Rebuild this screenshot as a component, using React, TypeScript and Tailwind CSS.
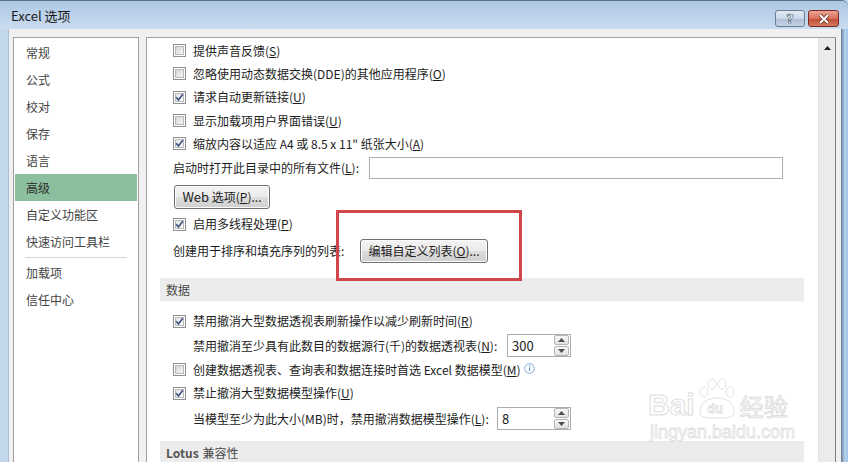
import React from "react";

const FONT = "font-['Microsoft_YaHei','Noto_Sans_CJK_SC','Noto_Sans',sans-serif]";

function Check({ checked }: { checked?: boolean }) {
  return (
    <svg width="13" height="13" viewBox="0 0 13 13" className="shrink-0">
      <defs>
        <linearGradient id={checked ? "gc" : "gu"} x1="0" y1="0" x2="1" y2="1">
          <stop offset="0" stopColor={checked ? "#e4e4e4" : "#d2d2d2"} />
          <stop offset="1" stopColor="#fafafa" />
        </linearGradient>
      </defs>
      <rect x="0.5" y="0.5" width="12" height="12" fill="#ffffff" stroke="#8e8f8f" />
      <rect x="2.5" y="2.5" width="8" height="8" fill={`url(#${checked ? "gc" : "gu"})`} stroke="#b9b9b9" />
      {checked && (
        <path d="M3.2 6.3 L5.4 8.9 L9.8 3.2" fill="none" stroke="#3f5486" strokeWidth="1.7" />
      )}
    </svg>
  );
}

function CheckRow({ checked, children, h }: { checked?: boolean; children: React.ReactNode; h: string }) {
  return (
    <div className={`flex items-center gap-[7px] pl-[13px] ${h}`}>
      <Check checked={checked} />
      <span className="whitespace-nowrap">{children}</span>
    </div>
  );
}

function WinButton({ children, w }: { children: React.ReactNode; w: string }) {
  return (
    <div
      className={`${w} h-[24px] shrink-0 flex items-center justify-center rounded-[3px] border border-[#707070] bg-[linear-gradient(to_bottom,#f3f3f3_0%,#ebebeb_50%,#dddddd_51%,#cfcfcf_100%)] shadow-[inset_0_0_0_1px_#fcfcfc]`}
    >
      <span className="whitespace-nowrap">{children}</span>
    </div>
  );
}

function SpinBox({ value, w }: { value: string; w: string }) {
  const btn =
    "h-[10px] w-[15px] flex items-center justify-center rounded-[2px] border border-[#b5b5b5] bg-[linear-gradient(to_bottom,#f6f6f6,#e2e2e2)]";
  return (
    <div className={`${w} h-[23px] flex border border-[#abadb3] bg-white`}>
      <span className="flex-1 pl-[4px] leading-[21px] text-[13px]">{value}</span>
      <div className="flex flex-col justify-center gap-[1px] pr-[1px]">
        <div className={btn}>
          <svg width="7" height="4" viewBox="0 0 7 4">
            <path d="M0 4 L3.5 0 L7 4 Z" fill="#4d4d4d" />
          </svg>
        </div>
        <div className={btn}>
          <svg width="7" height="4" viewBox="0 0 7 4">
            <path d="M0 0 L3.5 4 L7 0 Z" fill="#4d4d4d" />
          </svg>
        </div>
      </div>
    </div>
  );
}

function NavItem({ label, active }: { label: string; active?: boolean }) {
  return (
    <div
      className={`mx-[1px] h-[27px] flex items-center pl-[11px] ${
        active ? "bg-[#8cbf9d] text-[#2e2e2e]" : "text-[#444444]"
      }`}
    >
      {label}
    </div>
  );
}

function SectionHeader({ children }: { children: React.ReactNode }) {
  return (
    <div className="h-[24px] flex items-center pl-[6px] bg-[#ececec] text-[#4a4a4a] border-b border-[#f6f6f6]">
      {children}
    </div>
  );
}

export default function App() {
  return (
    <div className={`relative w-[848px] h-[462px] overflow-hidden bg-[#c4d8ec] ${FONT} text-[12px] text-[#1c1c1c]`}>
      {/* Title bar */}
      <div className="h-[29px] flex items-center pl-[11px] pr-[9px] bg-gradient-to-b from-[#aec8e4] to-[#cadcef] border-t border-[#5d6f84] rounded-tr-[6px]">
        <span className="text-[13px] text-[#1a1a1a] pt-[1px]">Excel 选项</span>
        <div className="ml-auto flex gap-[3px] self-start mt-[9px]">
          <div className="w-[30px] h-[17px] rounded-[3px] border border-[#6a7d94] bg-[linear-gradient(to_bottom,#e3ebf5_0%,#c9d7e8_50%,#aebfd6_51%,#c3d3e6_100%)] flex items-center justify-center">
            <span className="text-[13px] leading-none font-bold text-[#f4f7fb] [-webkit-text-stroke:0.6px_#3f5670] font-['DejaVu_Sans',sans-serif]">?</span>
          </div>
          <div className="w-[31px] h-[17px] rounded-[3px] border border-[#7a2a22] bg-[linear-gradient(to_bottom,#eba492_0%,#d8705d_50%,#c24a35_51%,#d27a5f_100%)] flex items-center justify-center">
            <svg width="12" height="10" viewBox="0 0 12 10">
              <path d="M2 1 L10 9 M10 1 L2 9" stroke="#5a1d14" strokeWidth="3.4" />
              <path d="M2 1 L10 9 M10 1 L2 9" stroke="#ffffff" strokeWidth="2.2" />
            </svg>
          </div>
        </div>
      </div>

      {/* Client area */}
      <div className="ml-[8px] mr-[7px] h-[433px] bg-[#f0f0f0] border-l border-[#aebfd3] flex pt-[8px] pl-[4px] pr-[5px] gap-[7px]">
        {/* Nav */}
        <div className="w-[126px] shrink-0 bg-white border border-[#a0a0a0] border-b-0 pt-[1px]">
          <NavItem label="常规" />
          <NavItem label="公式" />
          <NavItem label="校对" />
          <NavItem label="保存" />
          <NavItem label="语言" />
          <NavItem label="高级" active />
          <NavItem label="自定义功能区" />
          <NavItem label="快速访问工具栏" />
          <div className="h-[4px] flex items-center px-[11px]">
            <div className="h-px w-full bg-[#d5d5d5]" />
          </div>
          <NavItem label="加载项" />
          <NavItem label="信任中心" />
        </div>

        {/* Content */}
        <div className="flex-1 flex bg-white border border-[#a0a0a0] border-b-0 border-r-[#7f7f7f]">
          <div className="flex-1 pl-[13px] pr-[14px]">
            <div className="pt-[1px]">
              <CheckRow h="h-[23px]">
                提供声音反馈(<u>S</u>)
              </CheckRow>
              <CheckRow h="h-[23px]">
                忽略使用动态数据交换(DDE)的其他应用程序(<u>O</u>)
              </CheckRow>
              <CheckRow h="h-[24px]" checked>
                请求自动更新链接(<u>U</u>)
              </CheckRow>
              <CheckRow h="h-[23px]">
                显示加载项用户界面错误(<u>U</u>)
              </CheckRow>
              <CheckRow h="h-[23px]" checked>
                缩放内容以适应 A4 或 8.5 x 11" 纸张大小(<u>A</u>)
              </CheckRow>
            </div>

            <div className="h-[26px] flex items-center pl-[13px]">
              <span className="w-[196px] shrink-0 whitespace-nowrap">
                启动时打开此目录中的所有文件(<u>L</u>):
              </span>
              <div className="w-[414px] h-[22px] border border-[#abadb3] bg-white" />
            </div>

            <div className="pt-[4px] pb-[4px] pl-[14px]">
              <WinButton w="w-[96px]">
                <span className="text-[13px]">Web</span> 选项(<u>P</u>)...
              </WinButton>
            </div>

            <CheckRow h="h-[22px]" checked>
              启用多线程处理(<u>P</u>)
            </CheckRow>

            <div className="h-[32px] flex items-center pl-[13px]">
              <span className="w-[187px] shrink-0 whitespace-nowrap">创建用于排序和填充序列的列表:</span>
              <WinButton w="w-[128px]">
                编辑自定义列表(<u>O</u>)...
              </WinButton>
            </div>

            <div className="mt-[11px]">
              <SectionHeader>数据</SectionHeader>
            </div>

            <div className="mt-[7px]">
              <CheckRow h="h-[24px]" checked>
                禁用撤消大型数据透视表刷新操作以减少刷新时间(<u>R</u>)
              </CheckRow>
              <div className="h-[25px] flex items-center pl-[33px]">
                <span className="w-[314px] shrink-0 whitespace-nowrap">
                  禁用撤消至少具有此数目的数据源行(千)的数据透视表(<u>N</u>):
                </span>
                <SpinBox value="300" w="w-[64px]" />
              </div>
              <div className="flex items-center gap-[7px] pl-[13px] h-[23px]">
                <Check />
                <span className="whitespace-nowrap">
                  创建数据透视表、查询表和数据连接时首选 Excel 数据模型(<u>M</u>)
                </span>
                <svg width="11" height="11" viewBox="0 0 11 11" className="-ml-[4px] -mt-[3px]">
                  <circle cx="5.5" cy="5.5" r="4.8" fill="#ffffff" stroke="#7fa7d6" strokeWidth="1" />
                  <rect x="5" y="4.5" width="1.1" height="3.6" fill="#5d8fcb" />
                  <rect x="5" y="2.6" width="1.1" height="1.1" fill="#5d8fcb" />
                </svg>
              </div>
              <CheckRow h="h-[24px]" checked>
                禁止撤消大型数据模型操作(<u>U</u>)
              </CheckRow>
              <div className="h-[27px] flex items-center pl-[33px]">
                <span className="w-[304px] shrink-0 whitespace-nowrap">
                  当模型至少为此大小(MB)时，禁用撤消数据模型操作(<u>L</u>):
                </span>
                <SpinBox value="8" w="w-[74px]" />
              </div>
            </div>

            <div className="mt-[9px]">
              <SectionHeader>
                <span className="font-semibold text-[#555555]">Lotus</span>
                <span className="ml-[4px]">兼容性</span>
              </SectionHeader>
            </div>
          </div>

          {/* Scrollbar */}
          <div className="w-[17px] shrink-0 bg-[#ebebeb] border-l border-[#e2e2e2] flex justify-center pt-[8px]">
            <svg width="7" height="4" viewBox="0 0 7 4">
              <path d="M0 4 L3.5 0 L7 4 Z" fill="#1e1e1e" />
            </svg>
          </div>
        </div>
      </div>

      {/* Right window frame edge */}
      <div className="absolute top-[29px] right-0 w-[7px] h-[433px] bg-gradient-to-r from-[#7e96b0] via-[#b8d2ec] to-[#9ec3ea] border-l border-[#6f8299]" />

      {/* Red highlight rectangle */}
      <div className="absolute left-[336px] top-[210px] w-[186px] h-[71px] border-[3px] border-[#d0474b]" />

      {/* Baidu watermark */}
      <div className="absolute left-[648px] top-[368px] w-[160px] h-[72px] pointer-events-none">
        <div className="flex items-end">
          <span className="text-[30px] leading-none font-bold text-transparent [-webkit-text-stroke:1px_#dedede] font-['Liberation_Sans',sans-serif] mt-[22px]">
            Bai
          </span>
          <svg width="46" height="42" viewBox="0 0 46 42" className="-ml-[1px]">
            <ellipse cx="10" cy="14" rx="4" ry="5" fill="none" stroke="#e0e0e0" />
            <ellipse cx="18" cy="6" rx="4" ry="5" fill="none" stroke="#e0e0e0" />
            <ellipse cx="28" cy="6" rx="4" ry="5" fill="none" stroke="#e0e0e0" />
            <ellipse cx="36" cy="14" rx="4" ry="5" fill="none" stroke="#e0e0e0" />
            <path d="M6 34 C6 24 14 20 23 20 C32 20 40 24 40 34 C40 40 33 40 23 40 C13 40 6 40 6 34 Z" fill="none" stroke="#e0e0e0" />
            <text x="13" y="35" fontSize="13" fontWeight="700" fill="none" stroke="#dcdcdc" strokeWidth="0.8" fontFamily="Liberation Sans">du</text>
          </svg>
          <span className="text-[24px] leading-none text-transparent [-webkit-text-stroke:1px_#dedede] font-['Noto_Sans_CJK_SC',sans-serif] mb-[2px]">
            经验
          </span>
        </div>
        <div className="text-[18px] leading-none text-transparent [-webkit-text-stroke:0.8px_#dedede] font-['Liberation_Sans',sans-serif] mt-[3px] ml-[2px]">
          jingyan.baidu.com
        </div>
      </div>
    </div>
  );
}
